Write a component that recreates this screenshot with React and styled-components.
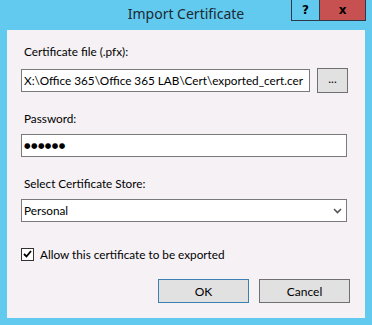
import React from "react";
import styled, { createGlobalStyle } from "styled-components";

const GlobalStyle = createGlobalStyle`
  html, body {
    margin: 0;
    padding: 0;
    background: #62c9ef;
  }
  body {
    font-family: Lato, "Noto Sans", sans-serif;
  }
`;

const Window = styled.div`
  width: 372px;
  height: 325px;
  background: #62c9ef;
  display: flex;
  flex-direction: column;
  box-sizing: border-box;
`;

const TitleBar = styled.div`
  height: 30px;
  display: grid;
  grid-template-columns: 1fr auto 1fr;
  flex-shrink: 0;
`;

const Title = styled.div`
  grid-column: 2;
  font-family: "Noto Sans", sans-serif;
  font-size: 14px;
  line-height: 28px;
  color: #1b2a33;
`;

const Caption = styled.div`
  grid-column: 3;
  justify-self: end;
  align-self: start;
  display: flex;
  margin-right: 6px;
  border: 1px solid #2c3b47;
  border-top: none;
  height: 20px;
`;

const CaptionButton = styled.div`
  width: ${({ $w }) => $w}px;
  background: ${({ $close }) => ($close ? "#c75050" : "transparent")};
  border-left: ${({ $close }) => ($close ? "1px solid #2c3b47" : "none")};
  display: flex;
  align-items: center;
  justify-content: center;
  font-family: "DejaVu Sans", sans-serif;
  font-weight: bold;
  font-size: 12px;
  color: #000;
`;

const Panel = styled.div`
  flex: 1;
  margin: 0 7px 7px 7px;
  background: #f5f1f5;
  padding: 14px 15px 15px 14px;
  display: flex;
  flex-direction: column;
  font-size: 11.75px;
  color: #000;
`;

const Fields = styled.div`
  display: flex;
  flex-direction: column;
  margin-right: 3px;
`;

const Label = styled.div`
  line-height: 16px;
  height: 16px;
  padding-left: 3px;
  margin-top: ${({ $mt }) => $mt || 0}px;
  white-space: nowrap;
`;

const Row = styled.div`
  display: flex;
  align-items: center;
  gap: 7px;
  margin-top: ${({ $mt }) => $mt || 0}px;
  margin-right: -1px;
`;

const Field = styled.div`
  flex: ${({ $grow }) => ($grow ? "1" : "none")};
  height: 23px;
  box-sizing: border-box;
  border: 1px solid #7a7a7a;
  background: #fff;
  padding: 0 2px;
  display: flex;
  align-items: center;
  white-space: nowrap;
  overflow: hidden;
  margin-top: ${({ $mt }) => $mt || 0}px;
  position: relative;
`;

const Dots = styled.span`
  font-family: "DejaVu Sans", sans-serif;
  font-size: 7.5px;
  letter-spacing: 0.4px;
  color: #000;
`;

const Chevron = styled.svg`
  position: absolute;
  right: 4px;
  top: 8px;
`;

const Browse = styled.button`
  width: 31px;
  height: 25px;
  box-sizing: border-box;
  border: 1px solid #707070;
  background: #e1e1e1;
  font-family: inherit;
  font-size: 12px;
  color: #000;
  padding: 0 0 4px;
  line-height: 1;
`;

const CheckRow = styled.label`
  display: flex;
  align-items: center;
  gap: 6px;
  height: 16px;
  margin-top: 24px;
  white-space: nowrap;
`;

const Box = styled.span`
  width: 13px;
  height: 13px;
  box-sizing: border-box;
  border: 1px solid #333;
  background: #fff;
  display: flex;
  align-items: center;
  justify-content: center;
`;

const Buttons = styled.div`
  display: flex;
  justify-content: flex-end;
  gap: 10px;
  margin-top: 17px;
`;

const DialogButton = styled.button`
  width: 91px;
  height: 24px;
  box-sizing: border-box;
  border: 1px solid ${({ $primary }) => ($primary ? "#3c7fb1" : "#707070")};
  background: #e1e1e1;
  font-family: inherit;
  font-size: 12px;
  color: #000;
  padding: 0;
`;

export default function App() {
  return (
    <>
      <GlobalStyle />
      <Window>
        <TitleBar>
          <Title>Import Certificate</Title>
          <Caption>
            <CaptionButton $w={27}>?</CaptionButton>
            <CaptionButton $w={45} $close>
              x
            </CaptionButton>
          </Caption>
        </TitleBar>
        <Panel>
          <Fields>
            <Label>Certificate file (.pfx):</Label>
            <Row $mt={8}>
              <Field $grow>X:\Office 365\Office 365 LAB\Cert\exported_cert.cer</Field>
              <Browse>...</Browse>
            </Row>
            <Label $mt={18}>Password:</Label>
            <Field $mt={7}>
              <Dots>●●●●●●</Dots>
            </Field>
            <Label $mt={19}>Select Certificate Store:</Label>
            <Field $mt={7}>
              Personal
              <Chevron width="9" height="6" viewBox="0 0 9 6">
                <path d="M1 1 L4.5 4.5 L8 1" fill="none" stroke="#555" strokeWidth="1.6" />
              </Chevron>
            </Field>
          </Fields>
          <CheckRow>
            <Box>
              <svg width="9" height="8" viewBox="0 0 9 8">
                <path d="M1 4 L3.5 6.5 L8 1" fill="none" stroke="#000" strokeWidth="1.8" />
              </svg>
            </Box>
            Allow this certificate to be exported
          </CheckRow>
          <Buttons>
            <DialogButton $primary>OK</DialogButton>
            <DialogButton>Cancel</DialogButton>
          </Buttons>
        </Panel>
      </Window>
    </>
  );
}
